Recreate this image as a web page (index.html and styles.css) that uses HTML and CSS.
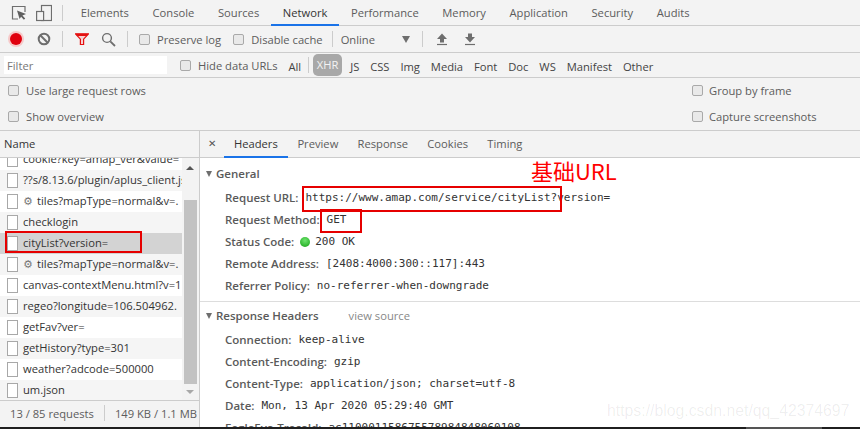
FILE: index.html
```html
<!DOCTYPE html>
<html lang="en">
<head>
<meta charset="utf-8">
<title>DevTools Network</title>
<link rel="stylesheet" href="styles.css">
</head>
<body>
<div class="page">
  <div class="devtools">
    <div class="tabbar">
      <svg class="ico ico-inspect" width="18" height="18" viewBox="0 0 18 18"><path d="M8 15H2.500V2.500H15V8" fill="none" stroke="#6e6e6e" stroke-width="1.200"/><path d="M7 6.500l9 3.500-3.600 1.500 2.800 3-1.300 1.200-2.800-3L9.600 15z" fill="#5f5f5f"/></svg>
      <svg class="ico ico-device" width="16" height="18" viewBox="0 0 16 18"><rect x="5.500" y="1.500" width="10" height="15" fill="none" stroke="#6e6e6e" stroke-width="1.200"/><rect x="0.600" y="7.500" width="7" height="9" fill="#f3f3f3" stroke="#6e6e6e" stroke-width="1.200"/></svg>
      <span class="vsep vsep-tab"></span>
      <div class="tabs">
        <span class="tab">Elements</span><span class="tab">Console</span><span class="tab">Sources</span><span class="tab active">Network</span><span class="tab">Performance</span><span class="tab">Memory</span><span class="tab">Application</span><span class="tab">Security</span><span class="tab">Audits</span>
      </div>
    </div>

    <div class="toolbar">
      <span class="record"></span>
      <svg class="ico ico-clear" width="14" height="14" viewBox="0 0 14 14"><circle cx="7" cy="7" r="5.300" fill="none" stroke="#6e6e6e" stroke-width="2"/><path d="M3.300 3.300l7.400 7.400" stroke="#6e6e6e" stroke-width="2"/></svg>
      <span class="vsep vsep-a"></span>
      <svg class="ico ico-filter" width="14" height="12" viewBox="0 0 14 12"><path d="M.5 .8h13L8.600 6.200V11.500H5.400V6.200z" fill="#f8d0d0" stroke="#e41010" stroke-width="1.200"/><path d="M.5 .8h13l-2 2.200h-9z" fill="#e41010"/></svg>
      <svg class="ico ico-search" width="15" height="15" viewBox="0 0 15 15"><circle cx="6" cy="6" r="4.400" fill="none" stroke="#6e6e6e" stroke-width="1.400"/><path d="M9.300 9.300l4.700 4.700" stroke="#6e6e6e" stroke-width="1.800"/></svg>
      <span class="vsep vsep-b"></span>
      <label class="check check-preserve"><span class="box"></span>Preserve log</label>
      <label class="check check-cache"><span class="box"></span>Disable cache</label>
      <span class="vsep vsep-c"></span>
      <span class="online">Online</span>
      <span class="caret"></span>
      <span class="vsep vsep-d"></span>
      <svg class="ico ico-up" width="12" height="13" viewBox="0 0 12 13"><path d="M6 .5L11 6H8v3.500H4V6H1z" fill="#6e6e6e"/><path d="M1 11.500h10" stroke="#6e6e6e" stroke-width="1.200"/></svg>
      <svg class="ico ico-down" width="12" height="13" viewBox="0 0 12 13"><path d="M6 9.500L11 4H8V.5H4V4H1z" fill="#6e6e6e"/><path d="M1 11.500h10" stroke="#6e6e6e" stroke-width="1.200"/></svg>
    </div>

    <div class="filterbar">
      <div class="filter-input">Filter</div>
      <label class="check check-hide"><span class="box"></span>Hide data URLs</label>
      <span class="ftype">All</span>
      <span class="vsep vsep-f"></span>
      <span class="ftype xhr">XHR</span>
      <span class="ftype">JS</span><span class="ftype">CSS</span><span class="ftype">Img</span><span class="ftype">Media</span><span class="ftype">Font</span><span class="ftype">Doc</span><span class="ftype">WS</span><span class="ftype">Manifest</span><span class="ftype">Other</span>
    </div>

    <div class="options">
      <div class="opt-col">
        <label class="check"><span class="box"></span>Use large request rows</label>
        <label class="check"><span class="box"></span>Show overview</label>
      </div>
      <div class="opt-col opt-right">
        <label class="check"><span class="box"></span>Group by frame</label>
        <label class="check"><span class="box"></span>Capture screenshots</label>
      </div>
    </div>

    <div class="main">
      <aside class="requests">
        <div class="name-head">Name</div>
        <div class="list-wrap">
          <div class="list">
            <div class="row first"><span class="file"></span><span class="rname">cookie?key=amap_ver&amp;value=</span></div>
            <div class="row"><span class="file"></span><span class="rname">??s/8.13.6/plugin/aplus_client.js</span></div>
            <div class="row"><span class="file"></span><span class="gear">⚙</span><span class="rname">tiles?mapType=normal&amp;v=.</span></div>
            <div class="row"><span class="file"></span><span class="rname">checklogin</span></div>
            <div class="row selected"><span class="file"></span><span class="rname">cityList?version=</span></div>
            <div class="row"><span class="file"></span><span class="gear">⚙</span><span class="rname">tiles?mapType=normal&amp;v=.</span></div>
            <div class="row"><span class="file"></span><span class="rname">canvas-contextMenu.html?v=1</span></div>
            <div class="row"><span class="file"></span><span class="rname">regeo?longitude=106.504962.</span></div>
            <div class="row"><span class="file"></span><span class="rname">getFav?ver=</span></div>
            <div class="row"><span class="file"></span><span class="rname">getHistory?type=301</span></div>
            <div class="row"><span class="file"></span><span class="rname">weather?adcode=500000</span></div>
            <div class="row"><span class="file"></span><span class="rname">um.json</span></div>
          </div>
          <div class="scrollbar">
            <span class="arrow-up"></span>
            <span class="thumb"></span>
            <span class="arrow-down"></span>
          </div>
        </div>
        <div class="status">
          <span>13 / 85 requests</span>
          <span class="vsep vsep-s"></span>
          <span class="status-size">149 KB / 1.1 MB</span>
        </div>
      </aside>

      <section class="details">
        <div class="detail-tabs">
          <span class="close">✕</span>
          <span class="dtab active">Headers</span><span class="dtab">Preview</span><span class="dtab">Response</span><span class="dtab">Cookies</span><span class="dtab">Timing</span>
        </div>
        <div class="detail-body">
          <div class="group general">
            <div class="group-title"><span class="tri"></span>General</div>
            <div class="kv"><b>Request URL:</b> <code>https://www.amap.com/service/cityList?version=</code></div>
            <div class="kv"><b>Request Method:</b> <code>GET</code></div>
            <div class="kv"><b>Status Code:</b> <span class="dot"></span><code>200 OK</code></div>
            <div class="kv"><b>Remote Address:</b> <code>[2408:4000:300::117]:443</code></div>
            <div class="kv"><b>Referrer Policy:</b> <code>no-referrer-when-downgrade</code></div>
          </div>
          <div class="group response">
            <div class="group-title"><span class="tri"></span>Response Headers<span class="view-source">view source</span></div>
            <div class="kv"><b>Connection:</b> <code>keep-alive</code></div>
            <div class="kv"><b>Content-Encoding:</b> <code>gzip</code></div>
            <div class="kv"><b>Content-Type:</b> <code>application/json; charset=utf-8</code></div>
            <div class="kv"><b>Date:</b> <code>Mon, 13 Apr 2020 05:29:40 GMT</code></div>
            <div class="kv"><b>EagleEye-TraceId:</b> <code>ac110001158675578984848060108</code></div>
          </div>
        </div>
      </section>
    </div>
  </div>

  <div class="taskbar"><span class="tb-a"></span><span class="tb-b"></span><span class="tb-c"></span></div>

  <span class="mark mark-name"></span>
  <span class="mark mark-url"></span>
  <span class="mark mark-get"></span>
  <span class="annot">基础URL</span>
  <span class="watermark">https://blog.csdn.net/qq_42374697</span>
</div>
</body>
</html>
```
FILE: styles.css
```css
* { box-sizing: border-box; }
html, body { margin: 0; padding: 0; background: #fff; }
body { font-family: "Open Sans", "Noto Sans", sans-serif; font-size: 11.200px; color: #5c5c5c; }
.page { position: relative; width: 860px; height: 429px; overflow: hidden; }
.devtools { height: 427px; display: flex; flex-direction: column; }
.ico { display: block; flex: none; }
.vsep { display: block; flex: none; width: 1px; height: 16px; background: #ccc; }

.tabbar { height: 26px; flex: none; display: flex; align-items: center; background: #f3f3f3; border-bottom: 1px solid #ccc; padding-left: 10px; }
.ico-device { margin-left: 8px; }
.vsep-tab { margin-left: 10px; }
.tabs { display: flex; height: 25px; margin-left: 6px; }
.tab { padding: 0 11.800px; line-height: 25px; white-space: nowrap; color: #5c5c5c; }
.tab.active { color: #333; border-bottom: 2px solid #1a73e8; margin-bottom: -1px; }

.toolbar { height: 27px; flex: none; display: flex; align-items: center; background: #f3f3f3; border-bottom: 1px solid #ccc; padding-left: 10px; }
.record { flex: none; width: 12px; height: 12px; border-radius: 50%; background: #e0000e; box-shadow: 0 0 0 2px #f6c9c9; }
.ico-clear { margin-left: 15px; }
.vsep-a { margin-left: 11px; }
.ico-filter { margin-left: 12px; }
.ico-search { margin-left: 12px; }
.vsep-b { margin-left: 11px; }
.check { display: flex; align-items: center; white-space: nowrap; }
.box { flex: none; width: 11px; height: 11px; margin-right: 7px; border: 1px solid #a9a9a9; border-radius: 2px; background: #e9e9e9; }
.check-preserve { margin-left: 11px; }
.check-cache { margin-left: 12px; }
.vsep-c { margin-left: 9px; }
.online { margin-left: 8px; }
.caret { flex: none; margin-left: 27px; width: 0; height: 0; border-left: 4px solid transparent; border-right: 4px solid transparent; border-top: 7px solid #6e6e6e; }
.vsep-d { margin-left: 12px; }
.ico-up { margin-left: 13px; }
.ico-down { margin-left: 16px; }

.filterbar { height: 25px; flex: none; display: flex; align-items: center; background: #f3f3f3; border-bottom: 1px solid #ccc; padding-left: 4px; }
.filter-input { flex: none; width: 163px; height: 18px; line-height: 20px; padding-left: 3px; background: #fff; color: #777; }
.check-hide { margin-left: 13px; }
.ftype { margin: 2px 0 0 10.900px; color: #444; white-space: nowrap; }
.vsep-f { margin-left: 7px; }
.ftype.xhr { margin: 0 0 0 4px; width: 29px; height: 22px; line-height: 22px; text-align: center; border-radius: 5px; background: #a8a8a8; color: #f3f3f3; }
.ftype.xhr + .ftype { margin-left: 8px; }

.options { height: 53px; flex: none; display: flex; justify-content: space-between; background: #f3f3f3; border-bottom: 1px solid #ccc; padding: 0 0 0 8px; }
.opt-col { display: flex; flex-direction: column; gap: 8px; padding-top: 3px; }
.opt-col .check { height: 18px; }
.opt-right { width: 168px; }
.opt-right .box { margin-right: 6px; }

.main { flex: 1; min-height: 0; display: flex; }
.requests { flex: none; width: 200px; display: flex; flex-direction: column; border-right: 1px solid #ccc; }
.name-head { height: 27px; flex: none; padding-left: 4px; line-height: 25px; background: #f3f3f3; border-bottom: 1px solid #ccc; color: #333; }
.list-wrap { flex: 1; min-height: 0; display: flex; }
.list { flex: none; width: 182px; overflow: hidden; }
.row { height: 21px; display: flex; align-items: center; padding-left: 7px; overflow: hidden; white-space: nowrap; color: #333; background: #fff; }
.row.first { margin-top: -9px; }
.row:nth-child(even) { background: #f5f5f5; }
.row.selected { background: #d3d3d3; }
.file { flex: none; width: 11px; height: 15px; margin-right: 5px; background: #fff; border: 1px solid #a8a8a8; }
.gear { flex: none; width: 14px; font-size: 11px; color: #777; font-family: "DejaVu Sans", sans-serif; }
.rname { margin-bottom: 2px; }
.scrollbar { flex: none; width: 17px; display: flex; flex-direction: column; align-items: center; background: #f3f3f3; border-right: 1px solid #f3f3f3; }
.arrow-up { flex: none; margin-top: 8px; width: 0; height: 0; border-left: 4px solid transparent; border-right: 4px solid transparent; border-bottom: 4px solid #555; }
.thumb { flex: none; margin-top: 30px; width: 13px; height: 184px; background: #c2c2c2; }
.arrow-down { flex: none; margin-top: 6px; width: 0; height: 0; border-left: 4px solid transparent; border-right: 4px solid transparent; border-top: 4px solid #a8a8a8; }
.status { height: 27px; flex: none; display: flex; align-items: center; padding: 0 0 2px 10px; overflow: hidden; white-space: nowrap; background: #f3f3f3; border-top: 1px solid #ccc; }
.vsep-s { margin: 0 10px; }
.status-size { flex: none; }

.details { flex: 1; min-width: 0; overflow: hidden; display: flex; flex-direction: column; }
.detail-tabs { height: 27px; flex: none; display: flex; background: #f3f3f3; border-bottom: 1px solid #ccc; padding-left: 8px; }
.close { flex: none; width: 16px; line-height: 25px; font-size: 10px; color: #555; font-family: "DejaVu Sans", sans-serif; }
.dtab { padding: 0 9.600px; line-height: 26px; white-space: nowrap; }
.dtab.active { color: #333; border-bottom: 2px solid #1a73e8; height: 27px; padding: 0 10px; }
.detail-body { flex: 1; min-height: 0; overflow: hidden; background: #fff; }
.group { padding-left: 6px; }
.general { height: 144px; padding-top: 5px; border-bottom: 1px solid #ddd; }
.response { padding-top: 3px; }
.group-title { height: 22px; line-height: 22px; font-size: 11.500px; font-weight: 600; color: #5a5a5a; display: flex; align-items: center; white-space: nowrap; }
.general .group-title { margin-bottom: 2px; }
.response .group-title { margin-bottom: 2px; }
.tri { flex: none; width: 0; height: 0; margin-right: 4px; border-left: 3.500px solid transparent; border-right: 3.500px solid transparent; border-top: 6px solid #6e6e6e; }
.view-source { margin-left: 30px; font-size: 11.200px; font-weight: 400; color: #888; }
.kv { height: 22px; line-height: 22px; padding-left: 19px; white-space: nowrap; display: flex; align-items: center; }
.kv b { font-size: 11.500px; font-weight: 600; color: #5a5a5a; margin-right: 7px; }
.kv code { font-family: "DejaVu Sans Mono", monospace; font-size: 11px; color: #333; }
.dot { flex: none; width: 10px; height: 10px; margin: 0 5px 0 -1px; border-radius: 50%; background: radial-gradient(circle at 50% 35%, #6fe56f, #12a012); }

.taskbar { height: 2px; display: flex; background: #1f1f1f; }
.tb-a { width: 746px; }
.tb-b { width: 76px; background: #555; }
.tb-c { flex: 1; }

.mark { position: absolute; border: 2px solid #e60000; }
.mark-name { left: 5px; top: 231px; width: 137px; height: 22px; }
.mark-url { left: 302px; top: 186px; width: 260px; height: 26px; }
.mark-get { left: 320px; top: 209px; width: 42px; height: 24px; }
.annot { position: absolute; left: 531px; top: 156px; font-family: "Noto Sans CJK SC", "Noto Sans", sans-serif; font-size: 22px; line-height: 28px; color: #f00; white-space: nowrap; }
.watermark { position: absolute; left: 607px; top: 400px; font-family: "Liberation Sans", sans-serif; font-size: 15.800px; line-height: 22px; color: rgba(0,0,0,.07); white-space: nowrap; }
```
